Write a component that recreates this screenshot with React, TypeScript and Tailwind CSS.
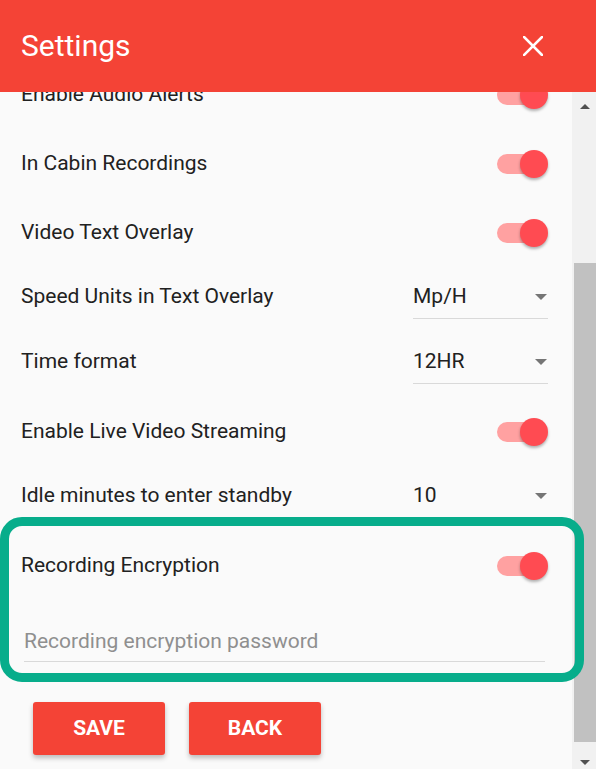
import React from "react";

function Toggle() {
  return (
    <div className="relative h-[30px] w-[52px] flex items-center">
      <div className="h-[20px] w-[44px] rounded-full bg-[#ffa1a1]" />
      <div className="absolute right-[1px] top-[1px] h-[28px] w-[28px] rounded-full bg-[#ff4b52] shadow-[0_2px_3px_rgba(0,0,0,0.3)]" />
    </div>
  );
}

function SwitchRow({ label }: { label: string }) {
  return (
    <div className="h-[69px] flex items-center justify-between pl-[21px] pr-[23px]">
      <span className="text-[21px] text-[#212121]">{label}</span>
      <Toggle />
    </div>
  );
}

function SelectRow({ label, value }: { label: string; value: string }) {
  return (
    <div className="h-[65px] pb-[5px] flex items-center justify-between pl-[21px] pr-[24px]">
      <span className="text-[21px] text-[#212121]">{label}</span>
      <div className="w-[135px] h-[44px] flex items-center justify-between border-b border-[#d9d9d9]">
        <span className="text-[21px] text-[#212121]">{value}</span>
        <svg width="12" height="6" viewBox="0 0 12 6" className="mr-[1px]">
          <path d="M0 0 L12 0 L6 6 Z" fill="#757575" />
        </svg>
      </div>
    </div>
  );
}

export default function App() {
  return (
    <div
      className="relative w-[596px] h-[769px] overflow-hidden flex flex-col bg-[#fafafa]"
      style={{ fontFamily: "Roboto, 'Liberation Sans', sans-serif" }}
    >
      <header className="h-[92px] shrink-0 bg-[#f44336] flex items-center justify-between pl-[21px] pr-[53px] pb-[1px] z-10">
        <h1 className="text-[30px] text-white font-normal">Settings</h1>
        <svg width="20" height="20" viewBox="0 0 20 20">
          <path d="M1 1 L19 19 M19 1 L1 19" stroke="#fff" strokeWidth="2.6" strokeLinecap="square" />
        </svg>
      </header>
      <div className="flex flex-1 min-h-0">
        <div className="flex-1 overflow-hidden">
          <div className="-mt-[32px]">
            <SwitchRow label="Enable Audio Alerts" />
            <SwitchRow label="In Cabin Recordings" />
            <SwitchRow label="Video Text Overlay" />
            <SelectRow label="Speed Units in Text Overlay" value="Mp/H" />
            <SelectRow label="Time format" value="12HR" />
            <SwitchRow label="Enable Live Video Streaming" />
            <SelectRow label="Idle minutes to enter standby" value="10" />
            <SwitchRow label="Recording Encryption" />
            <div className="pt-[29px] pl-[24px] pr-[27px]">
              <div className="h-[26px] flex items-center text-[21px] text-[#8f8f8f]">
                Recording encryption password
              </div>
              <div className="mt-[6px] border-b border-[#d9d9d9]" />
            </div>
            <div className="flex gap-[24px] pl-[33px] mt-[40px]">
              <button className="w-[132px] h-[53px] rounded-[3px] bg-[#f44336] text-white font-bold text-[21px] shadow-[0_3px_5px_rgba(0,0,0,0.25)]">
                SAVE
              </button>
              <button className="w-[132px] h-[53px] rounded-[3px] bg-[#f44336] text-white font-bold text-[21px] shadow-[0_3px_5px_rgba(0,0,0,0.25)]">
                BACK
              </button>
            </div>
          </div>
        </div>
        <div className="w-[24px] shrink-0 bg-[#f1f1f1] flex flex-col">
          <div className="h-[28px] flex items-center justify-center pl-[2px]">
            <svg width="10" height="5" viewBox="0 0 10 5">
              <path d="M0 5 L10 5 L5 0 Z" fill="#505050" />
            </svg>
          </div>
          <div className="mt-[143px] h-[479px] ml-[2px] bg-[#c1c1c1]" />
          <div className="pt-[18px] flex justify-center pl-[2px]">
            <svg width="10" height="5" viewBox="0 0 10 5">
              <path d="M0 0 L10 0 L5 5 Z" fill="#505050" />
            </svg>
          </div>
        </div>
      </div>
      <div className="absolute left-0 top-[517px] w-[584px] h-[165px] border-[9px] border-[#07ad8b] rounded-[22px] pointer-events-none" />
    </div>
  );
}
